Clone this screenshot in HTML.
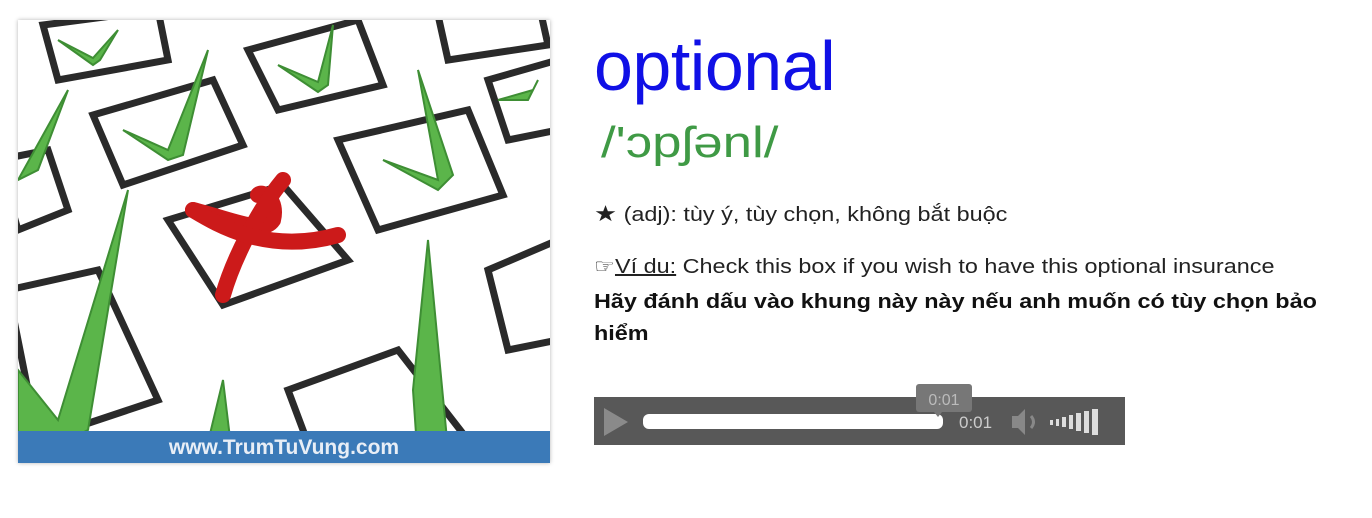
<!DOCTYPE html>
<html><head><meta charset="utf-8"><style>
body{margin:0;width:1372px;height:518px;background:#fff;position:relative;overflow:hidden;font-family:"Liberation Sans",Arial,sans-serif;}
.a{position:absolute;white-space:nowrap}
.s{transform-origin:0 0;transform:scaleX(1.17)}
</style></head><body>
<div class="a" style="left:18px;top:20px;width:532px;height:443px;box-shadow:0 0 4px rgba(0,0,0,.3);overflow:hidden;background:#fff">
<svg width="532" height="443" viewBox="0 0 532 443">
<g fill="none" stroke="#2a2a2a" stroke-width="7">
<polygon points="25,5 140,-10 150,40 40,60"/>
<polygon points="230,30 340,0 365,65 260,90"/>
<polygon points="420,-5 520,-20 530,25 430,40"/>
<polygon points="75,95 195,60 225,125 105,165"/>
<polygon points="470,60 540,40 540,110 490,120"/>
<polygon points="-20,140 30,130 50,190 0,210"/>
<polygon points="320,120 450,90 485,175 360,210"/>
<polygon points="150,200 265,165 330,240 205,285"/>
<polygon points="-10,270 80,250 140,380 20,420"/>
<polygon points="270,370 380,330 450,420 300,450"/>
<polygon points="470,250 540,220 540,320 490,330"/>
</g>
<g fill="#5bb54a" stroke="#3e8e34" stroke-width="2">
<path d="M40,20 L75,38 L100,10 L82,40 L75,45 Z"/>
<path d="M260,45 L300,62 L315,5 L310,65 L300,72 Z"/>
<path d="M105,110 L150,130 L190,30 L165,135 L150,140 Z"/>
<path d="M365,140 L420,160 L400,50 L435,155 L420,170 Z"/>
<path d="M0,160 L50,70 L20,150 Z"/>
<path d="M0,350 L40,400 L110,170 L70,410 L30,430 L0,420 Z"/>
<path d="M395,370 L410,220 L430,430 L400,443 Z"/>
<path d="M185,443 L205,360 L215,443 Z"/>
<path d="M480,80 L515,70 L520,60 L510,80 Z"/>
</g>
<g fill="none" stroke="#cc1a1a" stroke-width="16" stroke-linecap="round">
<path d="M175,190 C215,200 245,215 255,200 C260,180 245,170 240,175"/>
<path d="M265,160 C240,190 215,240 205,275"/>
<path d="M175,190 C200,205 250,235 320,215"/>
</g>
<rect x="0" y="411" width="532" height="32" fill="#3b7ab8"/>
<text x="266" y="434" text-anchor="middle" fill="#e8eef6" font-family="Liberation Sans,Arial,sans-serif" font-size="21" font-weight="bold">www.TrumTuVung.com</text>
</svg></div>
<div class="a" style="left:594px;top:26px;font-size:70px;color:#1010e6;letter-spacing:-0.5px">optional</div>
<div class="a s" style="left:601px;top:118px;font-size:44px;color:#3f9a45;transform:scaleX(1.2)">/'ɔpʃənl/</div>
<div class="a s" style="left:594px;top:201px;font-size:20px;color:#222"><span style="font-size:22px">★</span> (adj): tùy ý, tùy chọn, không bắt buộc</div>
<div class="a s" style="left:594px;top:254px;font-size:20px;color:#222">☞<u>Ví du:</u> Check this box if you wish to have this optional insurance</div>
<div class="a s" style="left:594px;top:286px;font-size:20px;font-weight:bold;color:#111;line-height:32px">Hãy đánh dấu vào khung này này nếu anh muốn có tùy chọn bảo<br>hiểm</div>
<div class="a" style="left:594px;top:397px;width:531px;height:48px;background:#585858"></div>
<svg class="a" style="left:594px;top:380px" width="531" height="70">
<path d="M10,28 L34,42 L10,56 Z" fill="#8a8a8a"/>
<rect x="49" y="34" width="300" height="15" rx="6" fill="#fff"/>
<rect x="322" y="4" width="56" height="28" rx="3" fill="#777"/>
<path d="M340,32 L348,32 L344,37 Z" fill="#777"/>
<text x="350" y="25" text-anchor="middle" font-size="16" fill="#bbb" font-family="Liberation Sans,Arial,sans-serif">0:01</text>
<text x="365" y="48" font-size="17" fill="#ccc" font-family="Liberation Sans,Arial,sans-serif">0:01</text>
<path d="M418,36 L424,36 L431,29 L431,55 L424,48 L418,48 Z" fill="#888"/>
<path d="M437,36 Q442,42 437,48" stroke="#888" stroke-width="3" fill="none"/>
<rect x="456" y="40" width="3" height="5" fill="#ddd"/>
<rect x="462" y="39" width="3" height="7" fill="#ddd"/>
<rect x="468" y="37" width="4" height="10" fill="#ddd"/>
<rect x="475" y="35" width="4" height="14" fill="#ddd"/>
<rect x="482" y="33" width="5" height="18" fill="#ddd"/>
<rect x="490" y="31" width="5" height="22" fill="#ddd"/>
<rect x="498" y="29" width="6" height="26" fill="#ddd"/>
</svg>
</body></html>
